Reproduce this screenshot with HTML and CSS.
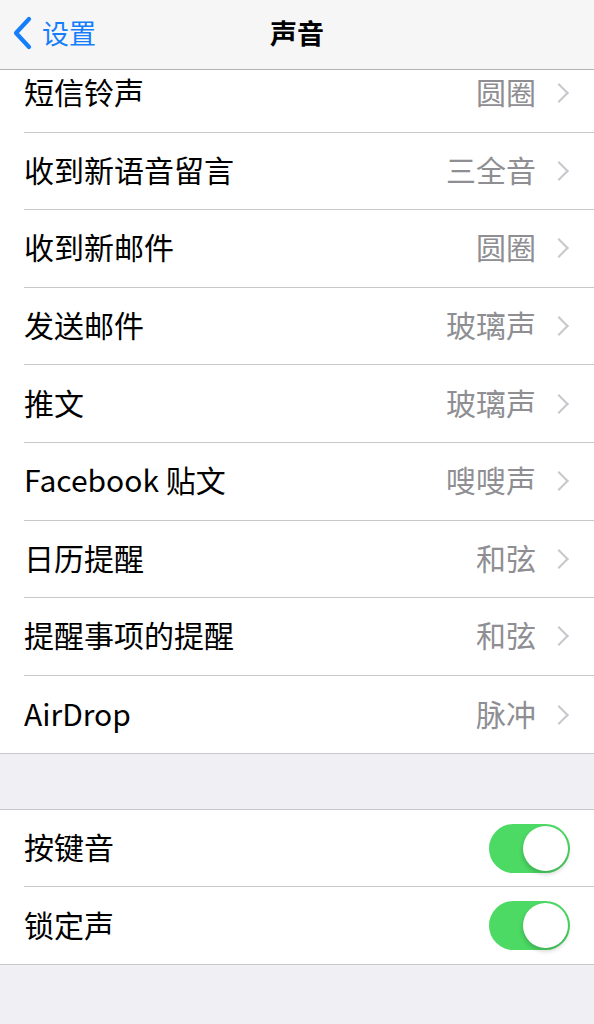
FILE: index.html
```html
<!DOCTYPE html>
<html lang="zh-CN">
<head>
    <meta charset="UTF-8">
    <meta name="viewport" content="width=device-width, initial-scale=1.0">
    <title>声音</title>
    <link rel="stylesheet" href="styles.css">
</head>
<body>
    <div class="nav">
        <a class="back" href="#">
            <svg class="back-icon" width="20" height="34" viewBox="0 0 20 34">
                <path d="M17 3 L4 17 L17 31" fill="none" stroke="#157efb" stroke-width="4.2" stroke-linecap="round" stroke-linejoin="round"/>
            </svg>
            <span>设置</span>
        </a>
        <p class="title">声音</p>
    </div>

    <div class="scroll">
        <ul class="group first">
            <li class="row"><span class="label">短信铃声</span><span class="value">圆圈</span><i class="chev"></i></li>
            <li class="row"><span class="label">收到新语音留言</span><span class="value">三全音</span><i class="chev"></i></li>
            <li class="row"><span class="label">收到新邮件</span><span class="value">圆圈</span><i class="chev"></i></li>
            <li class="row"><span class="label">发送邮件</span><span class="value">玻璃声</span><i class="chev"></i></li>
            <li class="row"><span class="label">推文</span><span class="value">玻璃声</span><i class="chev"></i></li>
            <li class="row"><span class="label">Facebook 贴文</span><span class="value">嗖嗖声</span><i class="chev"></i></li>
            <li class="row"><span class="label">日历提醒</span><span class="value">和弦</span><i class="chev"></i></li>
            <li class="row"><span class="label">提醒事项的提醒</span><span class="value">和弦</span><i class="chev"></i></li>
            <li class="row"><span class="label">AirDrop</span><span class="value">脉冲</span><i class="chev"></i></li>
        </ul>

        <ul class="group toggles">
            <li class="row"><span class="label">按键音</span><span class="switch on"></span></li>
            <li class="row"><span class="label">锁定声</span><span class="switch on"></span></li>
        </ul>
    </div>
</body>
</html>
```

FILE: styles.css
```css
* {
    box-sizing: border-box;
}
body {
    margin: 0;
    background-color: #efeff4;
    font-family: "Noto Sans CJK SC", "Noto Sans", sans-serif;
    color: #000;
}
.nav {
    height: 70px;
    background-color: #f6f6f7;
    border-bottom: 1px solid #b2b2b2;
    display: flex;
    align-items: center;
    justify-content: center;
    position: relative;
}
.back {
    position: absolute;
    left: 12px;
    top: 15px;
    display: flex;
    align-items: center;
    gap: 10px;
    color: #157efb;
    text-decoration: none;
    font-size: 27px;
    line-height: 36px;
}
.title {
    margin: 0;
    font-size: 27px;
    font-weight: 700;
    padding-bottom: 4px;
}
.scroll {
    overflow: hidden;
}
.group {
    list-style: none;
    margin: 0 0 55px;
    padding: 0 0 0 24px;
    background-color: #fff;
    border-top: 1px solid #c8c7cc;
    border-bottom: 1px solid #c8c7cc;
}
.group.first {
    margin-top: -15px;
    border-top: none;
}
.row {
    height: 77.6px;
    display: flex;
    align-items: center;
    padding-right: 24px;
    border-bottom: 1px solid #c8c7cc;
    font-size: 30px;
}
.toggles .row {
    height: 77px;
}
.row:last-child {
    border-bottom: none;
}
.label,
.value {
    padding-bottom: 4px;
}
.label {
    flex: 1;
    white-space: nowrap;
}
.value {
    color: #8e8e93;
}
.chev {
    width: 14px;
    height: 14px;
    border-top: 2px solid #c7c7cc;
    border-right: 2px solid #c7c7cc;
    transform: rotate(45deg);
    margin-left: 16px;
    margin-right: 4px;
}
.switch {
    width: 81px;
    height: 49px;
    border-radius: 25px;
    background-color: #4cd964;
    position: relative;
}
.switch::after {
    content: "";
    position: absolute;
    right: 2px;
    top: 2px;
    width: 45px;
    height: 45px;
    border-radius: 50%;
    background-color: #fff;
    box-shadow: 0 3px 5px rgba(0, 0, 0, 0.2);
}
```
